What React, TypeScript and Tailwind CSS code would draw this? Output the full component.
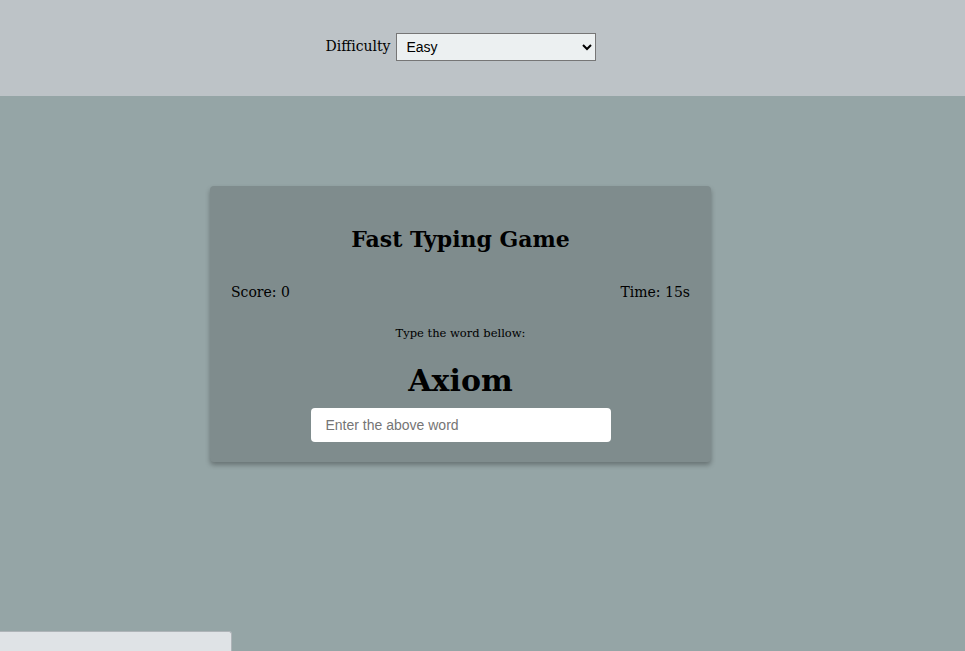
import React from "react";

export default function App() {
  const serif = { fontFamily: '"DejaVu Serif", Georgia, serif' };
  return (
    <div className="relative w-[965px] h-[651px] overflow-hidden bg-[#95a5a6]" style={serif}>
      <div className="h-[96px] bg-[#bdc3c7] w-full">
        <div className="w-[921px] flex justify-center items-start pt-[32px]">
          <div className="flex items-center gap-[5px]">
            <label className="text-[14px] text-black leading-[28px] pb-[2px]">Difficulty</label>
            <select
              defaultValue="easy"
              className="w-[200px] h-[28px] bg-[#ecf0f1] border border-[#767676] text-[14px] text-black pl-[6px] pr-[4px]"
              style={{ fontFamily: '"Liberation Sans", Arial, sans-serif' }}
            >
              <option value="easy">Easy</option>
              <option value="medium">Medium</option>
              <option value="hard">Hard</option>
            </select>
          </div>
        </div>
      </div>
      <div className="w-[921px] flex justify-center pt-[90px]">
        <div className="w-[501px] bg-[#7f8c8d] rounded-[4px] shadow-[0_3px_5px_rgba(0,0,0,0.3)] p-5 flex flex-col items-center text-black">
          <h1 className="mt-[19px] h-[28px] leading-[28px] text-[22px] font-bold">Fast Typing Game</h1>
          <div className="mt-[27px] w-full flex justify-between text-[14px] leading-[24px] px-[1px]">
            <span>Score: 0</span>
            <span>Time: 15s</span>
          </div>
          <p className="mt-[19px] text-[11.5px] leading-[20px]">Type the word bellow:</p>
          <h2 className="mt-[18px] text-[30px] leading-[40px] font-bold">Axiom</h2>
          <input
            type="text"
            placeholder="Enter the above word"
            className="mt-[7px] w-[300px] h-[34px] rounded-[4px] bg-white px-[15px] text-[14px] placeholder:text-[#757575] outline-none"
            style={{ fontFamily: '"Liberation Sans", Arial, sans-serif' }}
          />
        </div>
      </div>
      <div className="absolute left-0 bottom-0 w-[232px] h-[20px] bg-[#dfe3e6] border border-[#aeb4b8] border-l-0 border-b-0 rounded-tr-[3px]" />
    </div>
  );
}
